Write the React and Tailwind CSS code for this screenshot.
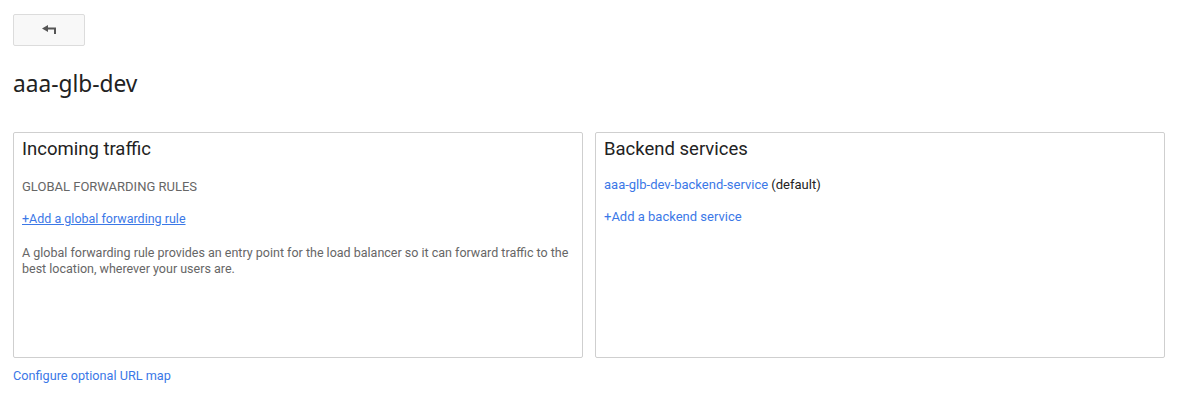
import React from "react";

export default function App() {
  return (
    <div className="w-[1183px] h-[397px] bg-white pl-[13px] pt-[14px]" style={{ fontFamily: "Roboto, 'Liberation Sans', sans-serif" }}>
      <button className="w-[72px] h-[32px] bg-[#f8f8f8] border border-[#dcdcdc] rounded-[2px] flex items-center justify-center">
        <svg width="15" height="10" viewBox="0 0 15 10">
          <path d="M0 3.5 L6 0 L6 7 Z" fill="#555" />
          <path d="M5 3.5 H13 V9" fill="none" stroke="#555" strokeWidth="2" />
        </svg>
      </button>
      <h1 className="mt-[22px] h-[32px] leading-[32px] text-[22.7px] text-[#222]" style={{ fontFamily: "'Noto Sans', 'Open Sans', sans-serif" }}>
        aaa-glb-dev
      </h1>
      <div className="mt-[32px] flex gap-[12px] w-[1152px]">
        <div className="w-[570px] h-[226px] border border-[#cfcfcf] rounded-[2px] px-[8px] pt-[4px]">
          <h2 className="text-[18.5px] leading-[24px] text-[#222]">Incoming traffic</h2>
          <div className="mt-[18px] text-[13px] leading-[16px] text-[#666]">GLOBAL FORWARDING RULES</div>
          <div className="mt-[16px] text-[12.5px] leading-[16px]">
            <a className="text-[#3b78e7] underline">+Add a global forwarding rule</a>
          </div>
          <p className="mt-[18px] text-[12.5px] leading-[16px] text-[#666]">
            A global forwarding rule provides an entry point for the load balancer so it can forward traffic to the best location, wherever your users are.
          </p>
        </div>
        <div className="w-[570px] h-[226px] border border-[#cfcfcf] rounded-[2px] px-[8px] pt-[4px]">
          <h2 className="text-[18.5px] leading-[24px] text-[#222]">Backend services</h2>
          <div className="mt-[16px] text-[13px] leading-[16px] text-[#222]">
            <a className="text-[#3b78e7]">aaa-glb-dev-backend-service</a> (default)
          </div>
          <div className="mt-[16px] text-[13px] leading-[16px]">
            <a className="text-[#3b78e7]">+Add a backend service</a>
          </div>
        </div>
      </div>
      <div className="mt-[10px] text-[12.7px] leading-[16px]">
        <a className="text-[#3b78e7]">Configure optional URL map</a>
      </div>
    </div>
  );
}
